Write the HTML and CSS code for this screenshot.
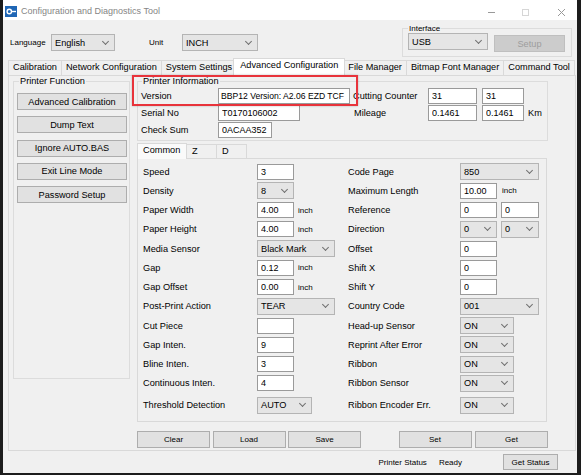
FILE: index.html
```html
<!DOCTYPE html>
<html lang="en">
<head>
  <meta charset="UTF-8">
  <title>Configuration and Diagnostics Tool</title>
  <link rel="stylesheet" href="styles.css">
</head>
<body>
  <div class="window">
    <div class="titlebar">
      <svg class="app-icon" viewBox="0 0 12 11">
        <rect width="12" height="11" fill="#1f66b5"/>
        <circle cx="4.3" cy="5.5" r="2.2" fill="none" stroke="#fff" stroke-width="1.4"/>
        <path d="M6.6 5.5H11" stroke="#fff" stroke-width="1.4"/>
      </svg>
      <span class="titlebar__text">Configuration and Diagnostics Tool</span>
      <svg class="wc wc--min" viewBox="0 0 7 7"><path d="M0 3.5H7"/></svg>
      <svg class="wc wc--max" viewBox="0 0 7 7"><rect x="0.5" y="0.5" width="6" height="6"/></svg>
      <svg class="wc wc--close" viewBox="0 0 7 7"><path d="M0 0L7 7M7 0L0 7"/></svg>
    </div>

    <div class="topbar">
      <span class="topbar__label topbar__label--lang">Language</span>
      <div class="combo combo--lang">English</div>
      <span class="topbar__label topbar__label--unit">Unit</span>
      <div class="combo combo--unit">INCH</div>
      <fieldset class="group group--iface">
        <legend>Interface</legend>
        <div class="iface">
          <div class="combo combo--usb">USB</div>
          <button class="btn btn--setup" disabled>Setup</button>
        </div>
      </fieldset>
    </div>

    <div class="tabs">
      <div class="tab">Calibration</div>
      <div class="tab">Network Configuration</div>
      <div class="tab">System Settings</div>
      <div class="tab tab--active">Advanced Configuration</div>
      <div class="tab">File Manager</div>
      <div class="tab">Bitmap Font Manager</div>
      <div class="tab">Command Tool</div>
    </div>

    <div class="page">
      <fieldset class="group group--func">
        <legend>Printer Function</legend>
        <div class="func">
          <button class="btn btn--func">Advanced Calibration</button>
          <button class="btn btn--func">Dump Text</button>
          <button class="btn btn--func">Ignore AUTO.BAS</button>
          <button class="btn btn--func">Exit Line Mode</button>
          <button class="btn btn--func">Password Setup</button>
        </div>
      </fieldset>

      <div class="right">
        <fieldset class="group group--info">
          <legend>Printer Information</legend>
          <div class="info">
            <span>Version</span>
            <input class="field field--version" value="BBP12 Version: A2.06 EZD TCF">
            <span>Cutting Counter</span>
            <input class="field field--cnt" value="31">
            <input class="field field--cnt2" value="31">

            <span>Serial No</span>
            <input class="field field--serial" value="T0170106002">
            <span class="info__mileage">Mileage</span>
            <input class="field field--cnt" value="0.1461">
            <div class="info__km">
              <input class="field field--cnt2" value="0.1461">
              <span>Km</span>
            </div>

            <span>Check Sum</span>
            <input class="field field--sum" value="0ACAA352">
          </div>
        </fieldset>

        <div class="subtabs">
          <div class="subtab subtab--active">Common</div>
          <div class="subtab">Z</div>
          <div class="subtab">D</div>
        </div>

        <div class="subpage">
          <div class="form form--left">
            <span class="form__label">Speed</span>
            <div class="form__ctl"><input class="field field--s" value="3"></div>
            <span class="form__label">Density</span>
            <div class="form__ctl"><div class="combo combo--s">8</div></div>
            <span class="form__label">Paper Width</span>
            <div class="form__ctl"><input class="field field--s" value="4.00"><span class="unit">inch</span></div>
            <span class="form__label">Paper Height</span>
            <div class="form__ctl"><input class="field field--s" value="4.00"><span class="unit">inch</span></div>
            <span class="form__label">Media Sensor</span>
            <div class="form__ctl"><div class="combo combo--m">Black Mark</div></div>
            <span class="form__label">Gap</span>
            <div class="form__ctl"><input class="field field--s" value="0.12"><span class="unit">inch</span></div>
            <span class="form__label">Gap Offset</span>
            <div class="form__ctl"><input class="field field--s" value="0.00"><span class="unit">inch</span></div>
            <span class="form__label">Post-Print Action</span>
            <div class="form__ctl"><div class="combo combo--m">TEAR</div></div>
            <span class="form__label">Cut Piece</span>
            <div class="form__ctl"><input class="field field--s" value=""></div>
            <span class="form__label">Gap Inten.</span>
            <div class="form__ctl"><input class="field field--s" value="9"></div>
            <span class="form__label">Bline Inten.</span>
            <div class="form__ctl"><input class="field field--s" value="3"></div>
            <span class="form__label">Continuous Inten.</span>
            <div class="form__ctl"><input class="field field--s" value="4"></div>
            <span class="form__label">Threshold Detection</span>
            <div class="form__ctl"><div class="combo combo--t">AUTO</div></div>
          </div>

          <div class="form form--right">
            <span class="form__label">Code Page</span>
            <div class="form__ctl"><div class="combo combo--l">850</div></div>
            <span class="form__label">Maximum Length</span>
            <div class="form__ctl"><input class="field field--s" value="10.00"><span class="unit unit--r">inch</span></div>
            <span class="form__label">Reference</span>
            <div class="form__ctl"><input class="field field--s" value="0"><input class="field field--s2" value="0"></div>
            <span class="form__label">Direction</span>
            <div class="form__ctl"><div class="combo combo--s">0</div><div class="combo combo--s2">0</div></div>
            <span class="form__label">Offset</span>
            <div class="form__ctl"><input class="field field--s" value="0"></div>
            <span class="form__label">Shift X</span>
            <div class="form__ctl"><input class="field field--s" value="0"></div>
            <span class="form__label">Shift Y</span>
            <div class="form__ctl"><input class="field field--s" value="0"></div>
            <span class="form__label">Country Code</span>
            <div class="form__ctl"><div class="combo combo--l">001</div></div>
            <span class="form__label">Head-up Sensor</span>
            <div class="form__ctl"><div class="combo combo--on">ON</div></div>
            <span class="form__label">Reprint After Error</span>
            <div class="form__ctl"><div class="combo combo--on">ON</div></div>
            <span class="form__label">Ribbon</span>
            <div class="form__ctl"><div class="combo combo--on">ON</div></div>
            <span class="form__label">Ribbon Sensor</span>
            <div class="form__ctl"><div class="combo combo--on">ON</div></div>
            <span class="form__label">Ribbon Encoder Err.</span>
            <div class="form__ctl"><div class="combo combo--on">ON</div></div>
          </div>
        </div>

        <div class="actions">
          <button class="btn btn--action">Clear</button>
          <button class="btn btn--action">Load</button>
          <button class="btn btn--action">Save</button>
          <button class="btn btn--action btn--set">Set</button>
          <button class="btn btn--action">Get</button>
        </div>
      </div>

      <div class="highlight"></div>
    </div>

    <div class="statusbar">
      <span class="statusbar__label">Printer Status</span>
      <span class="statusbar__value">Ready</span>
      <button class="btn btn--status">Get Status</button>
    </div>
  </div>
</body>
</html>
```

FILE: styles.css
```css
* {
  box-sizing: border-box;
}

body {
  margin: 0;
  background: #1c1c1c;
  font-family: "Liberation Sans", Arial, sans-serif;
  font-size: 9.2px;
  color: #000;
}

.window {
  width: 574px;
  height: 473px;
  margin-left: 3px;
  background: #f0f0f0;
  display: flex;
  flex-direction: column;
}

/* title bar */

.titlebar {
  flex: none;
  height: 20px;
  background: #fff;
  display: flex;
  align-items: center;
}

.app-icon {
  width: 12px;
  height: 11px;
  margin: 2px 0 0 2px;
}

.titlebar__text {
  margin: 2px 0 0 4px;
  font-size: 9px;
  color: #858585;
}

.wc {
  width: 7px;
  height: 7px;
  margin-top: 4px;
  fill: none;
  stroke: #999;
  stroke-width: 1;
}

.wc--min {
  margin-left: auto;
}

.wc--max {
  margin-left: 27px;
  stroke: #d6d6d6;
}

.wc--close {
  margin: 4px 12px 0 29px;
}

/* buttons */

.btn {
  padding: 0;
  font-family: inherit;
  font-size: 9.2px;
  color: #000;
  background: #e1e1e1;
  border: 1px solid #adadad;
}

.btn:disabled {
  background: #cccccc;
  border-color: #bfbfbf;
  color: #9d9d9d;
}

/* language / unit / interface */

.topbar {
  flex: none;
  height: 37px;
  display: flex;
  align-items: flex-start;
}

.topbar__label {
  margin-top: 14px;
  line-height: 18px;
  font-size: 8px;
}

.topbar__label--lang {
  width: 41px;
  margin-left: 7px;
}

.topbar__label--unit {
  width: 33px;
  margin-left: 34px;
}

.combo--lang {
  margin-top: 14px;
  width: 64px;
  height: 18px;
}

.combo--unit {
  margin-top: 14px;
  width: 76px;
  height: 18px;
}

.group {
  margin: 0;
  padding: 0;
  min-width: 0;
  border: 1px solid #dcdcdc;
}

.group legend {
  margin-left: 5px;
  padding: 0 1px;
  line-height: 11px;
}

.group--iface {
  margin: 3px 0 0 144px;
  width: 170px;
  height: 34px;
}

.group--iface legend {
  font-size: 8px;
}

.iface {
  display: flex;
  align-items: flex-start;
  margin-top: -1px;
}

.combo--usb {
  width: 80px;
  height: 19px;
  margin-left: 5px;
}

.btn--setup {
  width: 71px;
  height: 17px;
  margin: 2px 0 0 6px;
}

/* main tabs */

.tabs {
  flex: none;
  height: 19px;
  margin-bottom: -1px;
  padding-left: 5px;
  display: flex;
  align-items: flex-end;
  position: relative;
  z-index: 1;
}

.tab {
  height: 15px;
  margin: 0 -1px 1px 0;
  padding: 0 4px;
  line-height: 13px;
  border: 1px solid #d9d9d9;
  border-bottom: 0;
  white-space: nowrap;
}

.tab--active {
  height: 18px;
  margin: 0 -2px 0 -3px;
  padding: 0 6px;
  background: #fff;
  position: relative;
}

.page {
  flex: none;
  position: relative;
  margin-left: 5px;
  width: 568px;
  height: 376px;
  border: 1px solid #d9d9d9;
  display: flex;
  align-items: flex-start;
}

/* printer function */

.group--func {
  margin-left: 4px;
  width: 117px;
  height: 303px;
}

.func {
  display: flex;
  flex-direction: column;
  gap: 6.25px;
  padding: 6px 0 0 3px;
}

.btn--func {
  width: 110px;
  height: 17px;
}

/* right column */

.right {
  margin-left: 7px;
  width: 411px;
}

.group--info {
  width: 411px;
  height: 65px;
}

.group--info legend {
  margin-left: 4px;
}

.info {
  display: grid;
  grid-template-columns: 77px 135px 75px 54px auto;
  grid-auto-rows: 17px;
  align-items: center;
  padding-left: 3px;
}

.info__mileage {
  padding-left: 1px;
}

.info__km {
  display: flex;
  align-items: center;
  gap: 4px;
}

.field {
  height: 16px;
  padding: 0 0 0 3px;
  border: 1px solid #9a9a9a;
  background: #fff;
  font-family: "Liberation Sans", Arial, sans-serif;
  font-size: 9px;
  color: #000;
  outline: none;
}

.field--version {
  width: 132px;
  padding-left: 2px;
  font-size: 8.6px;
}

.field--serial { width: 82px; }
.field--sum { width: 54px; }
.field--cnt { width: 49px; }
.field--cnt2 { width: 42px; }
.field--s { width: 37px; }
.field--s2 { width: 38px; }

.subtabs {
  margin: 1px 0 -1px;
  height: 17px;
  display: flex;
  align-items: flex-end;
  position: relative;
  z-index: 1;
}

.subtab {
  width: 31px;
  height: 14px;
  margin: 0 0 1px -1px;
  padding-left: 5px;
  line-height: 12px;
  border: 1px solid #d9d9d9;
  border-bottom: 0;
}

.subtab--active {
  width: 50px;
  height: 16px;
  margin: 0;
  padding-left: 5px;
  line-height: 13px;
  background: #fafafa;
}

.subpage {
  width: 410px;
  height: 264px;
  padding: 3px 0 0 5px;
  border: 1px solid #d9d9d9;
  display: flex;
}

.form {
  display: grid;
  grid-template-rows: repeat(12, 19.25px) 24px;
  align-items: center;
}

.form--left {
  width: 205px;
  grid-template-columns: 114px 1fr;
}

.form--right {
  flex: 1;
  grid-template-columns: 112px 1fr;
}

.form__label {
  white-space: nowrap;
}

.form__ctl {
  display: flex;
  align-items: center;
  gap: 4px;
}

.unit {
  font-size: 8px;
}

.unit--r {
  margin-left: 1px;
}

.combo {
  display: flex;
  align-items: center;
  justify-content: space-between;
  height: 17px;
  padding-left: 3px;
  background: #e5e5e5;
  border: 1px solid #b4b4b4;
  white-space: nowrap;
}

.combo::after {
  content: "";
  width: 4px;
  height: 4px;
  margin: -3px 6px 0 0;
  border-right: 1px solid #707070;
  border-bottom: 1px solid #707070;
  transform: rotate(45deg);
}

.combo--s { width: 37px; }
.combo--s2 { width: 38px; }
.combo--m { width: 78px; }
.combo--t { width: 55px; }
.combo--l { width: 79px; }
.combo--on { width: 54px; }

.actions {
  margin-top: 9px;
  display: flex;
  gap: 2.5px;
}

.btn--action {
  width: 73px;
  height: 17px;
  font-size: 8px;
}

.btn--set {
  margin-left: auto;
  margin-right: 1px;
}

/* red call-out over the version field */

.highlight {
  position: absolute;
  left: 123px;
  top: -1px;
  width: 226px;
  height: 31px;
  border: 2px solid #e8333b;
  box-shadow: 0 0 2px rgba(0, 0, 0, 0.25);
  z-index: 2;
}

/* status bar */

.statusbar {
  flex: 1;
  display: flex;
  align-items: center;
  justify-content: flex-end;
  padding-right: 19px;
  font-size: 8px;
}

.statusbar__value {
  margin: 0 41px 0 12px;
}

.btn--status {
  width: 55px;
  height: 16px;
  font-size: 8px;
}
```
